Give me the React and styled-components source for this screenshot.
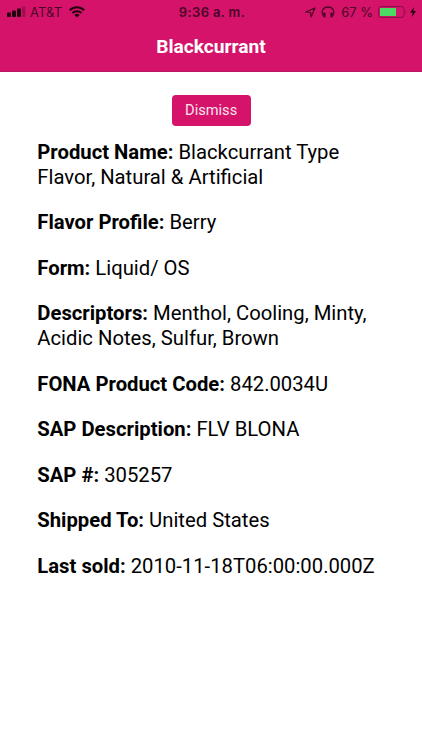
import React from 'react'
import styled, { createGlobalStyle } from 'styled-components'

const GlobalStyle = createGlobalStyle`
    body {
        margin : 0;
        background : #ffffff;
        font-family : Roboto, sans-serif;
    }
`
const Screen = styled.div`
    min-height : 750px;
    background : #ffffff;
    color : #000000;
`
const Header = styled.header`
    height : 71px;
    border-bottom : 1px solid #b81862;
    background : #d5136a;
`
const StatusBar = styled.div`
    display : grid;
    grid-template-columns : 1fr auto 1fr;
    align-items : center;
    height : 24px;
    padding : 0 6px 0 7px;
    color : #4a0626;
    font-family : Inter, sans-serif;
    font-size : 13px;
`
const StatusGroup = styled.div`
    display : flex;
    align-items : center;
    justify-content : ${props => props.$end ? 'flex-end' : 'flex-start'};
    white-space : nowrap;
`
const StatusText = styled.span`
    margin : ${props => props.$margin};
    letter-spacing : ${props => props.$spacing};
`
const Icon = styled.svg`
    display : block;
    flex : none;
    margin-right : ${props => props.$gap || '0'};
`
const Clock = styled.div`
    padding-left : 1px;
    font-weight : 600;
    letter-spacing : 0.35px;
`
const Title = styled.h1`
    margin : 0;
    color : #ffffff;
    font-size : 19.2px;
    font-weight : 700;
    line-height : 46px;
    text-align : center;
`
const Content = styled.main`
    display : flex;
    flex-direction : column;
    padding : 23px 37px 0 37.3px;
`
const DismissButton = styled.button`
    align-self : center;
    width : 79px;
    height : 31px;
    margin-bottom : 13.8px;
    padding : 0 0 1px;
    border : none;
    border-radius : 4px;
    background : #d5136a;
    color : #fbe3ee;
    font-family : Roboto, sans-serif;
    font-size : 14.6px;
`
const Field = styled.p`
    margin : 0 0 20.5px;
    font-size : 20.25px;
    line-height : 25px;
`

const fields = [
    { label : "Product Name:", value : "Blackcurrant Type Flavor, Natural & Artificial" },
    { label : "Flavor Profile:", value : "Berry" },
    { label : "Form:", value : "Liquid/ OS" },
    { label : "Descriptors:", value : "Menthol, Cooling, Minty, Acidic Notes, Sulfur, Brown" },
    { label : "FONA Product Code:", value : "842.0034U" },
    { label : "SAP Description:", value : "FLV BLONA" },
    { label : "SAP #:", value : "305257" },
    { label : "Shipped To:", value : "United States" },
    { label : "Last sold:", value : "2010-11-18T06:00:00.000Z" }
]

function SignalIcon(){
    return (
        <Icon width="19" height="12" viewBox="0 0 19 12" $gap="4px">
            <rect x="0" y="6.5" width="4" height="4.5" rx="1" fill="#24020f" />
            <rect x="5" y="4.5" width="4" height="6.5" rx="1" fill="#24020f" />
            <rect x="10" y="2.5" width="4" height="8.5" rx="1" fill="#24020f" />
            <rect x="15" y="0.5" width="3.5" height="10.5" rx="1" fill="#a40f51" />
        </Icon>
    )
}
function WifiIcon(){
    return (
        <Icon width="16" height="12" viewBox="0 0 16 12" fill="none" stroke="#24020f" strokeWidth="2">
            <path d="M0.8 4.2 C4.8 0.2 11.2 0.2 15.2 4.2" />
            <path d="M3.4 7 C6 4.5 10 4.5 12.6 7" />
            <path d="M5.4 8.9 C6.9 7.5 9.1 7.5 10.6 8.9 L8 11.5 Z" fill="#24020f" stroke="none" />
        </Icon>
    )
}
function LocationIcon(){
    return (
        <Icon width="11" height="11" viewBox="0 0 11 11" $gap="5px">
            <path d="M10 1 L1 4.9 L5.5 5.5 L6.1 10 Z" fill="none" stroke="#4a0626" strokeWidth="1.2" strokeLinejoin="round" />
        </Icon>
    )
}
function HeadphonesIcon(){
    return (
        <Icon width="14" height="12" viewBox="0 0 14 12">
            <path d="M2.4 10 C-0.6 5 2.5 1 7 1 C11.5 1 14.6 5 11.6 10" fill="none" stroke="#4a0626" strokeWidth="1.3" />
            <rect x="2.3" y="6.5" width="2.3" height="5" rx="0.8" fill="#4a0626" />
            <rect x="9.4" y="6.5" width="2.3" height="5" rx="0.8" fill="#4a0626" />
        </Icon>
    )
}
function BatteryIcon(){
    return (
        <Icon width="29" height="12" viewBox="0 0 29 12" $gap="3px">
            <rect x="0.6" y="0.6" width="25.4" height="10.8" rx="2.4" fill="none" stroke="#87103f" strokeWidth="1" />
            <rect x="2" y="2" width="16" height="8" fill="#4cd964" />
            <path d="M27.3 4 Q28.7 6 27.3 8 Z" fill="#87103f" />
        </Icon>
    )
}
function BoltIcon(){
    return (
        <Icon width="6" height="10" viewBox="0 0 6 10">
            <path d="M4 0 L0 5.6 H2.6 L1.8 10 L6 4.1 H3.3 Z" fill="#24020f" />
        </Icon>
    )
}

export default function App() {
    return (
        <Screen>
            <GlobalStyle />
            <Header>
                <StatusBar>
                    <StatusGroup>
                        <SignalIcon />
                        <StatusText $margin="0 7px 0 0" $spacing="0.1px">AT&amp;T</StatusText>
                        <WifiIcon />
                    </StatusGroup>
                    <Clock>9:36 a. m.</Clock>
                    <StatusGroup $end>
                        <LocationIcon />
                        <HeadphonesIcon />
                        <StatusText $margin="0 5px 0 6px" $spacing="0">67 %</StatusText>
                        <BatteryIcon />
                        <BoltIcon />
                    </StatusGroup>
                </StatusBar>
                <Title>Blackcurrant</Title>
            </Header>
            <Content>
                <DismissButton>Dismiss</DismissButton>
                {fields.map(field => (
                    <Field key={field.label}><b>{field.label}</b> {field.value}</Field>
                ))}
            </Content>
        </Screen>
    )
}
